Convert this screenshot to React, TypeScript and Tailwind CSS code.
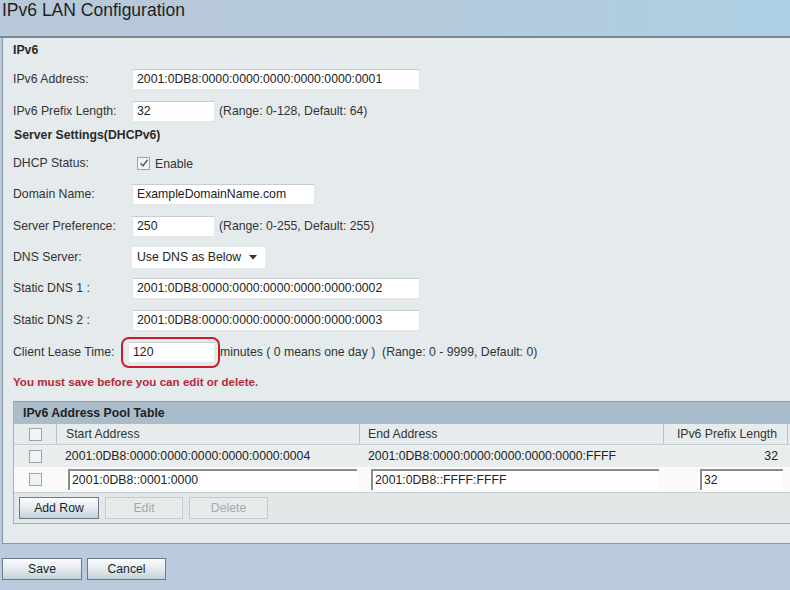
import type { ReactNode } from "react";

const FONT = "font-['Liberation_Sans',Arial,sans-serif]";

function Row({ label, h, children }: { label: string; h: string; children?: ReactNode }) {
  return (
    <div className={`flex items-center ${h}`}>
      <span className="w-[119px] shrink-0 text-[#333]">{label}</span>
      {children}
    </div>
  );
}

function Field({ value, w }: { value: string; w: string }) {
  return (
    <div
      className={`${w} h-[21px] flex items-center bg-white border border-[#e2e6e7] border-t-[#c6ccd0] pl-[4px] text-[#222]`}
    >
      {value}
    </div>
  );
}

function InsetField({ value, w }: { value: string; w: string }) {
  return (
    <div
      className={`${w} h-[21px] flex items-center bg-white border-t-2 border-l-2 border-t-[#8c8c8c] border-l-[#8c8c8c] pl-[2px] text-[#222]`}
    >
      {value}
    </div>
  );
}

function Box({ checked }: { checked?: boolean }) {
  return (
    <span className="w-[13px] h-[13px] border border-[#9aa4aa] bg-[#f2f4f4] flex items-center justify-center">
      {checked && (
        <svg width="10" height="10" viewBox="0 0 10 10">
          <path d="M1.5 5.2 L4 7.8 L8.6 1.8" fill="none" stroke="#56616c" strokeWidth="1.5" />
        </svg>
      )}
    </span>
  );
}

function Btn({ label, disabled, w = "w-[80px]" }: { label: string; disabled?: boolean; w?: string }) {
  return (
    <div
      className={
        disabled
          ? `${w} h-[22px] flex items-center justify-center border border-[#c3cbd0] bg-[#e6eaeb] text-[#a4abb0]`
          : `${w} h-[22px] flex items-center justify-center border border-[#6a7a86] bg-gradient-to-b from-[#fbfcfd] via-[#e4ebef] to-[#c3d1da] text-[#1e1e1e]`
      }
    >
      {label}
    </div>
  );
}

export default function App() {
  return (
    <div className={`${FONT} w-[790px] h-[590px] overflow-hidden bg-[#b9cbdc] text-[12.25px] leading-none`}>
      {/* Title bar */}
      <div className="h-[38px] border-b-2 border-[#7a8894] bg-gradient-to-r from-[#b8c8d8] via-[#b4c9db] to-[#aed0e4] pl-[2px] pt-[2px]">
        <h1 className="text-[17.5px] text-[#1f1f1f] leading-none">IPv6 LAN Configuration</h1>
      </div>

      {/* Main panel */}
      <div className="ml-[2px] h-[506px] border-l border-b border-[#8797a3] bg-[#e5ebec] pl-[10px]">
        <div className="flex items-center h-[24px] font-bold text-[#2a2a2a]">IPv6</div>
        <Row label="IPv6 Address:" h="h-[34px]">
          <Field value="2001:0DB8:0000:0000:0000:0000:0000:0001" w="w-[288px]" />
        </Row>
        <Row label="IPv6 Prefix Length:" h="h-[30px]">
          <Field value="32" w="w-[83px]" />
          <span className="ml-[4px] text-[#333]">(Range: 0-128, Default: 64)</span>
        </Row>
        <div className="flex items-center h-[18px] pl-[1px] font-bold text-[#2a2a2a]">Server Settings(DHCPv6)</div>
        <Row label="DHCP Status:" h="h-[38px]">
          <span className="ml-[5px]">
            <Box checked />
          </span>
          <span className="ml-[5px] mt-[3px] text-[#333]">Enable</span>
        </Row>
        <Row label="Domain Name:" h="h-[24px]">
          <Field value="ExampleDomainName.com" w="w-[183px]" />
        </Row>
        <Row label="Server Preference:" h="h-[40px]">
          <Field value="250" w="w-[83px]" />
          <span className="ml-[4px] text-[#333]">(Range: 0-255, Default: 255)</span>
        </Row>
        <Row label="DNS Server:" h="h-[22px]">
          <div className="w-[133px] h-[21px] flex items-center bg-white pl-[5px] text-[#222]">
            Use DNS as Below
            <svg className="ml-[8px]" width="8" height="5" viewBox="0 0 8 5">
              <path d="M0 0 H8 L4 4.5 Z" fill="#333" />
            </svg>
          </div>
        </Row>
        <Row label="Static DNS 1 :" h="h-[40px]">
          <Field value="2001:0DB8:0000:0000:0000:0000:0000:0002" w="w-[288px]" />
        </Row>
        <Row label="Static DNS 2 :" h="h-[24px]">
          <Field value="2001:0DB8:0000:0000:0000:0000:0000:0003" w="w-[288px]" />
        </Row>
        <div className="flex items-center h-[40px]">
          <span className="w-[115px] shrink-0 text-[#333]">Client Lease Time:</span>
          <div className="relative">
            <Field value="120" w="w-[87px]" />
            <span className="absolute -left-[7px] -top-[5px] w-[99px] h-[31px] rounded-[8px] border-[2.5px] border-[#cc1c2c]" />
          </div>
          <span className="ml-[5px] text-[#333] whitespace-pre">
            minutes ( 0 means one day )  (Range: 0 - 9999, Default: 0)
          </span>
        </div>
        <div className="flex items-center h-[20px] font-bold text-[11.6px] text-[#b4283c]">
          You must save before you can edit or delete.
        </div>

        {/* Pool table */}
        <div className="mt-[9px] border-l border-b border-[#a3b1bb] bg-[#e2e7e8]">
          <div className="h-[23px] flex items-center pl-[9px] bg-[#a9bccb] border-t border-[#8d9da8] font-bold text-[#222]">
            IPv6 Address Pool Table
          </div>
          <div className="flex h-[21px] bg-[#e7ebec] border-b border-[#c5ced3] text-[#333]">
            <div className="w-[43px] flex items-center justify-center border-r border-[#b7c3ca]">
              <Box />
            </div>
            <div className="w-[303px] flex items-center pl-[9px] border-r border-[#b7c3ca]">Start Address</div>
            <div className="w-[304px] flex items-center pl-[8px] border-r border-[#b7c3ca]">End Address</div>
            <div className="w-[124px] flex items-center justify-end pr-[10px] border-r border-[#b7c3ca]">
              IPv6 Prefix Length
            </div>
            <div className="flex-1" />
          </div>
          <div className="flex h-[22px] bg-[#eaeded] text-[#222]">
            <div className="w-[43px] flex items-center justify-center">
              <Box />
            </div>
            <div className="w-[303px] flex items-center pl-[8px]">2001:0DB8:0000:0000:0000:0000:0000:0004</div>
            <div className="w-[304px] flex items-center pl-[8px]">2001:0DB8:0000:0000:0000:0000:0000:FFFF</div>
            <div className="w-[124px] flex items-center justify-end pr-[10px]">32</div>
          </div>
          <div className="flex h-[26px] items-center bg-[#fafafa] border-b border-[#c5ced3]">
            <div className="w-[43px] flex items-center justify-center">
              <Box />
            </div>
            <div className="w-[303px] pl-[11px]">
              <InsetField value="2001:0DB8::0001:0000" w="w-[289px]" />
            </div>
            <div className="w-[304px] pl-[11px]">
              <InsetField value="2001:0DB8::FFFF:FFFF" w="w-[288px]" />
            </div>
            <div className="w-[124px] pl-[36px]">
              <InsetField value="32" w="w-[83px]" />
            </div>
          </div>
          <div className="flex h-[30px] items-center gap-[6px] pl-[5px]">
            <Btn label="Add Row" />
            <Btn label="Edit" disabled w="w-[78px]" />
            <Btn label="Delete" disabled w="w-[79px]" />
          </div>
        </div>
      </div>

      {/* Footer buttons */}
      <div className="flex gap-[5px] pl-[2px] mt-[14px]">
        <Btn label="Save" w="w-[80px]" />
        <Btn label="Cancel" w="w-[79px]" />
      </div>
    </div>
  );
}
